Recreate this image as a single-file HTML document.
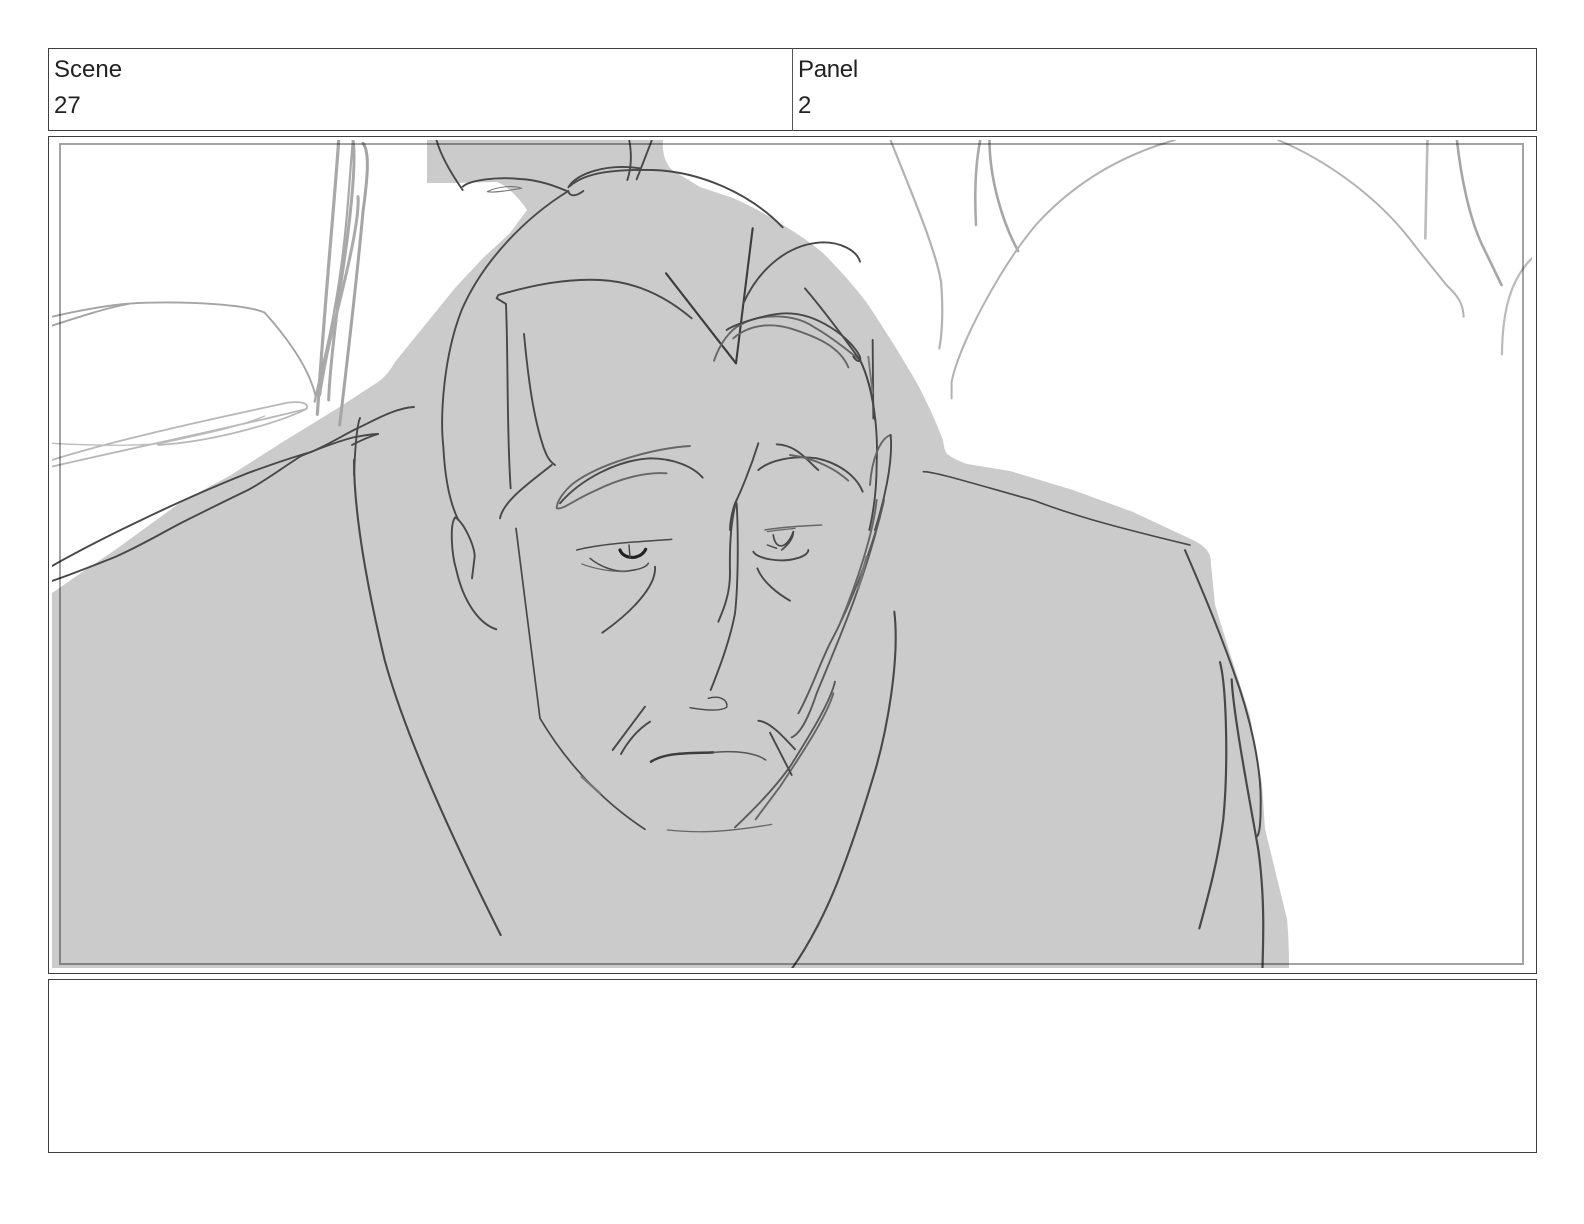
<!DOCTYPE html>
<html><head><meta charset="utf-8"><title>Scene 27 Panel 2</title>
<style>
html,body{margin:0;padding:0;background:#fff;}
body{width:1584px;height:1224px;position:relative;overflow:hidden;font-family:"Liberation Sans",sans-serif;color:#222;}
.b{position:absolute;box-sizing:border-box;border:1px solid #3f3f3f;}
.t{position:absolute;font-size:24px;line-height:36px;white-space:nowrap;}
svg{position:absolute;left:0;top:0;}
path{fill:none;stroke-linecap:round;stroke-linejoin:round;vector-effect:non-scaling-stroke;}
.d path{stroke:#484848;stroke-width:1.9;}
.l path{stroke:#b2b2b2;stroke-width:2;}
.soft{filter:blur(.35px);}
</style></head>
<body>
<div class="b" style="left:48px;top:48px;width:1489px;height:83px;"></div>
<div style="position:absolute;left:792px;top:48px;width:1px;height:83px;background:#555;"></div>
<div class="t" style="left:54px;top:52px;">Scene<br>27</div>
<div class="t" style="left:798px;top:52px;letter-spacing:-.3px;">Panel<br>2</div>
<div class="b" style="left:48px;top:136px;width:1489px;height:838px;"></div>
<div class="b" style="left:48px;top:979px;width:1489px;height:174px;"></div>

<svg width="1584" height="1224" viewBox="0 0 1584 1224">
<defs><clipPath id="c"><rect x="52" y="140" width="1480" height="828"/></clipPath></defs>
<g clip-path="url(#c)">
<g class="soft">
<path style="fill:#cbcbcb;stroke:none" d="M52,968 L52,593 L81,573 L115,550 L181,502 L231,475 L281,443 L338,408 L378,382 Q388,375 395,362 L455,288 L483,258 L510,233 L527,210 Q522,202 513,193 Q505,185 497,182 L455,183 L427,183 L427,140 L663,140 Q662,155 667,163 Q670,170 677,173 L700,187 L733,198 Q760,210 783,225 Q805,238 823,253 Q848,278 867,303 Q895,345 918,385 Q932,412 941,435 L943,440 Q944,450 947,454 Q955,460 967,464 L1010,471 L1073,490 L1133,512 L1193,540 Q1205,546 1208,552 Q1211,556 1211,564 L1215,605 L1228,647 L1250,716 L1262,784 L1265,829 L1287,919 Q1289,940 1289,968 Z"/>

<!-- crop A: head -->
<g class="d" transform="translate(400,130) scale(.33333)">
<path d="M505,183 C380,260 250,390 185,540 C130,680 120,860 130,950 C135,1050 150,1120 175,1170"/>
<path d="M110,32 C125,85 160,140 188,180"/>
<path d="M188,170 C210,150 290,140 360,147 C420,150 470,170 505,185"/>
<path style="stroke:#777;stroke-width:1.1" d="M262,185 C290,170 340,165 365,175 C340,178 290,190 262,185"/>
<path d="M505,185 C510,198 525,202 550,183"/>
<path d="M505,172 C530,130 620,100 720,115"/>
<path d="M510,168 C560,125 650,118 760,120 C900,125 1050,190 1148,292"/>
<path d="M688,32 C695,70 695,110 682,150"/>
<path d="M755,32 C740,70 725,110 710,148"/>
<path d="M875,565 C810,510 720,455 600,450 C500,445 400,465 295,495 L290,505 L318,522 C325,700 320,900 332,1075"/>
<path d="M372,612 C385,750 400,860 430,950 C440,980 450,995 465,1005"/>
<path d="M455,1005 C400,1050 310,1110 300,1165"/>
<path d="M798,430 L1008,700 L1058,295" style="stroke:#3c3c3c;stroke-width:2.1"/>
<path d="M1030,520 C1080,410 1170,340 1270,337 C1320,337 1370,360 1380,395"/>
<path style="stroke:#666" d="M942,692 C960,640 990,600 1020,585 C1080,550 1180,550 1240,590 C1310,630 1365,680 1380,690"/>
<path d="M980,600 C1000,585 1100,550 1160,550 C1250,550 1350,620 1380,680 C1385,700 1370,695 1360,680"/>
<path d="M1215,475 C1270,540 1330,620 1380,690 C1400,730 1420,800 1425,870"/>
<path style="stroke:#666" d="M1000,625 C1040,590 1100,575 1170,595 C1250,620 1320,650 1345,712"/>
<path d="M1418,630 L1420,865"/>
<path style="stroke:#777" d="M1405,680 L1418,790"/>
<path d="M1380,690 C1420,770 1435,900 1430,1000 C1430,1100 1415,1170 1408,1200"/>
<path style="stroke:#666" d="M1472,915 C1440,925 1415,990 1410,1065"/>
<path d="M1472,915 C1480,1000 1450,1120 1425,1200"/>
<path style="stroke:#666" d="M870,948 C760,955 600,1000 520,1060 C490,1085 470,1115 470,1135 C490,1140 520,1110 590,1080 C660,1045 740,1025 800,1030"/>
<path d="M480,1120 C540,1050 650,990 750,985 C820,985 880,1010 908,1043"/>
<path d="M1075,1020 C1110,990 1180,975 1250,985 C1320,1000 1370,1040 1388,1085"/>
<path d="M1130,943 C1190,945 1220,990 1255,1020"/>
<path style="stroke:#666" d="M1170,975 C1250,985 1310,1020 1345,1052"/>
<path d="M1075,940 C1050,1020 1020,1090 1005,1120 C995,1150 990,1180 990,1200"/>
</g>

<!-- crop B: face -->
<g class="d" transform="translate(480,500) scale(.33333)">
<path d="M770,0 C755,50 748,130 750,220 C750,290 725,340 715,365"/>
<path d="M770,10 C775,100 775,250 765,340 C750,420 720,500 692,570"/>
<path style="stroke-width:1.4" d="M630,623 C670,630 720,635 740,622 C745,600 720,585 685,595"/>
<path style="stroke-width:1.5" d="M290,150 C370,130 480,125 575,118"/>
<path style="stroke:#222;stroke-width:3.2" d="M420,150 C430,178 480,182 497,148"/>
<path style="stroke-width:1.5" d="M447,135 L450,172"/>
<path style="stroke-width:1.5" d="M330,175 C360,200 410,220 450,212 C480,208 500,200 505,190"/>
<path style="stroke-width:1.2;stroke:#666" d="M305,192 C340,205 380,215 435,215"/>
<path d="M525,200 C530,260 450,340 367,398"/>
<path style="stroke-width:1.7" d="M108,85 L180,655 C230,740 330,880 495,988"/>
<path style="stroke:#777;stroke-width:2.4" d="M305,830 L360,880"/>
<path style="stroke-width:1.5;stroke:#666" d="M855,90 C910,80 970,78 1025,75"/>
<path style="stroke-width:1.3;stroke:#666" d="M862,95 C890,90 920,88 945,85"/>
<path style="stroke-width:1.7" d="M880,105 C885,150 920,150 940,95"/>
<path style="stroke-width:1.7" d="M905,150 C930,130 940,110 940,95"/>
<path style="stroke-width:1.4" d="M862,135 L890,145"/>
<path d="M820,155 C830,175 900,190 950,175 C970,170 985,160 985,150"/>
<path d="M832,205 C850,250 900,285 930,302"/>
<path style="stroke:#5a5a5a" d="M1212,0 C1190,100 1130,280 1050,430 C1020,490 985,590 955,640"/>
<path style="stroke:#666" d="M1190,0 C1180,100 1130,250 1080,370"/>
<path style="stroke:#5a5a5a" d="M1200,50 C1150,250 1080,410 1010,580 C990,640 965,700 935,712"/>
<path style="stroke:#777;stroke-width:2.4" d="M1160,170 L1135,265"/>
<path style="stroke:#5a5a5a" d="M1065,545 C1050,610 980,720 930,800 C880,870 820,930 765,982"/>
<path style="stroke:#666" d="M1060,580 C1040,650 960,770 900,860 C870,900 840,940 827,958"/>
<path d="M835,662 C870,665 910,710 945,748"/>
<path d="M870,698 L935,825"/>
<path style="stroke:#3c3c3c;stroke-width:2.5" d="M513,785 C560,755 640,760 700,757"/>
<path style="stroke:#555;stroke-width:1.5" d="M700,757 C770,750 830,760 857,780"/>
<path d="M495,620 L398,750"/>
<path d="M510,665 C470,690 440,730 423,762"/>
<path style="stroke:#666;stroke-width:1.3" d="M562,990 C640,998 720,1000 875,973"/>
<path style="stroke-width:2.1" d="M1243,335 C1260,480 1220,700 1180,830 C1150,930 1110,1050 1075,1140 C1040,1230 990,1330 933,1410"/>
</g>

<!-- crop C: background left -->
<g transform="translate(48,135) scale(.33333)">
<path style="stroke:#a8a8a8;stroke-width:3.2" d="M872,15 C860,200 830,500 808,838"/>
<path style="stroke:#a8a8a8;stroke-width:2.2" d="M915,15 C905,100 900,300 860,520 C840,640 820,700 800,800"/>
<path style="stroke:#a8a8a8;stroke-width:3" d="M915,15 C925,80 910,250 870,500 C860,600 845,700 842,795"/>
<path style="stroke:#aaa;stroke-width:3" d="M930,185 C935,250 900,400 860,560 C845,620 830,680 815,780"/>
<path style="stroke:#a4a4a4;stroke-width:3" d="M945,25 C965,50 960,120 945,230 C925,450 895,700 875,870"/>
<path style="stroke:#a4a4a4;stroke-width:1.9" d="M12,545 C100,525 200,505 300,503 C450,500 600,510 650,533 C710,600 780,690 802,780"/>
<path style="stroke:#a4a4a4;stroke-width:1.9" d="M12,572 C80,550 170,520 240,507"/>
<path style="stroke:#b8b8b8;stroke-width:1.8" d="M12,975 C200,915 500,850 720,803 C760,798 785,805 775,822 C700,860 500,920 330,930"/>
<path style="stroke:#b8b8b8;stroke-width:1.8" d="M12,995 C200,950 500,890 775,822"/>
<path style="stroke:#bbb;stroke-width:1.3" d="M12,925 C100,930 250,935 340,925 C450,900 560,880 650,843"/>
</g>

<!-- shoulder strokes, page coordinates -->
<g class="d">
<path d="M52,566 C75,553 100,540 131,525 C170,506 210,488 248,473 C270,465 290,458 311,452 C330,444 345,434 358,428 C375,420 395,408 414,407"/>
<path d="M52,581 C75,573 95,565 115,557 C140,546 160,534 181,523 C205,511 225,501 248,490 C265,481 282,468 301,456 C318,449 338,441 355,437 C362,436 370,434 378,434"/>
<path d="M360,418 C357,425 355,450 354,475"/>
<path d="M352,445 C358,442 365,438 378,434"/>
</g>

<!-- crop F: lower left -->
<g class="d" transform="translate(48,460) scale(.33333)">
<path style="stroke-width:2.1" d="M918,0 C918,150 950,350 1010,600 C1070,820 1200,1110 1358,1425"/>
<path d="M1222,172 C1205,190 1210,280 1225,330 C1245,420 1290,490 1345,508"/>
<path d="M1222,172 C1250,190 1280,260 1280,290 L1272,355"/>
</g>

<!-- crop D: background right -->
<g class="l" transform="translate(880,135) scale(.4211,.33333)">
<path style="stroke-width:2.2" d="M25,15 C60,130 130,330 145,440 C150,520 148,590 141,640"/>
<path style="stroke:#aaa;stroke-width:2.6" d="M238,15 C225,100 225,200 228,270"/>
<path style="stroke:#a6a6a6;stroke-width:2.6" d="M260,15 C260,130 290,260 328,348"/>
<path d="M700,15 C590,55 470,130 370,270 C290,390 190,620 170,740 L170,790"/>
<path d="M945,15 C1060,75 1180,185 1260,315 C1290,365 1320,410 1345,450 C1375,485 1385,510 1386,545"/>
<path style="stroke:#bbb;stroke-width:2.6" d="M1300,15 L1295,310"/>
<path style="stroke:#a6a6a6;stroke-width:2.6" d="M1370,15 C1380,130 1400,250 1430,330 L1476,450"/>
<path style="stroke:#bbb;stroke-width:2.2" d="M1548,370 C1500,430 1478,520 1477,658"/>
</g>

<!-- crop E: shoulder right -->
<g class="d" transform="translate(900,440) scale(.33333,.3444)">
<path style="stroke-width:1.6" d="M70,92 C100,90 250,135 400,175 C550,230 700,265 870,305"/>
<path style="stroke-width:2" d="M855,320 C900,420 960,560 1000,670 C1050,800 1085,950 1082,1060 C1082,1100 1080,1140 1072,1150"/>
<path style="stroke-width:2.2" d="M960,645 C980,720 985,950 970,1100 C955,1220 920,1340 898,1418"/>
<path style="stroke-width:2.2" d="M995,695 C1000,800 1050,1050 1075,1190 C1095,1330 1090,1450 1087,1545"/>
</g>
</g>
</g>
<rect x="60" y="144" width="1463" height="820" fill="none" stroke="#000" stroke-opacity=".36" stroke-width="2"/>
</svg>
</body></html>
